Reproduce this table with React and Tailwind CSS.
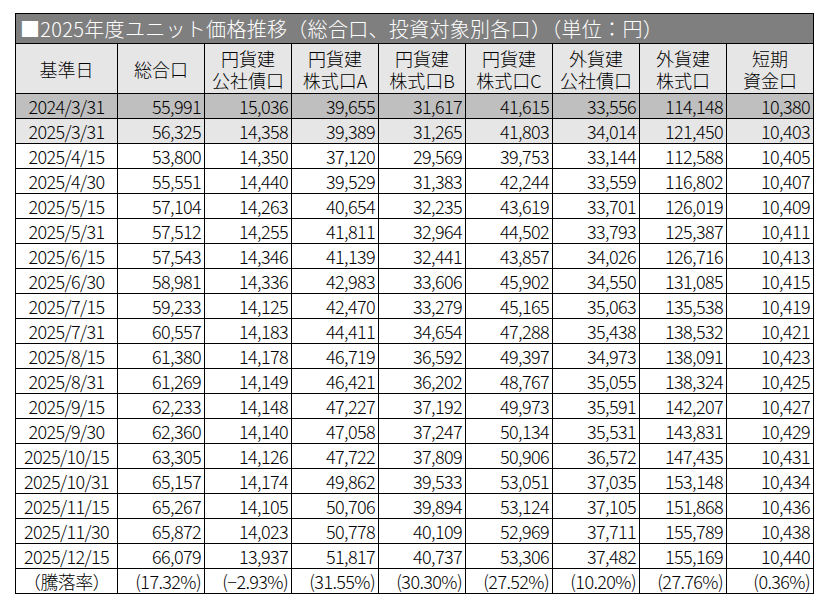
import React from "react";

const cols = [
  ["基準日"],
  ["総合口"],
  ["円貨建", "公社債口"],
  ["円貨建", "株式口A"],
  ["円貨建", "株式口B"],
  ["円貨建", "株式口C"],
  ["外貨建", "公社債口"],
  ["外貨建", "株式口"],
  ["短期", "資金口"],
];

const rows = [
  ["2024/3/31", "55,991", "15,036", "39,655", "31,617", "41,615", "33,556", "114,148", "10,380"],
  ["2025/3/31", "56,325", "14,358", "39,389", "31,265", "41,803", "34,014", "121,450", "10,403"],
  ["2025/4/15", "53,800", "14,350", "37,120", "29,569", "39,753", "33,144", "112,588", "10,405"],
  ["2025/4/30", "55,551", "14,440", "39,529", "31,383", "42,244", "33,559", "116,802", "10,407"],
  ["2025/5/15", "57,104", "14,263", "40,654", "32,235", "43,619", "33,701", "126,019", "10,409"],
  ["2025/5/31", "57,512", "14,255", "41,811", "32,964", "44,502", "33,793", "125,387", "10,411"],
  ["2025/6/15", "57,543", "14,346", "41,139", "32,441", "43,857", "34,026", "126,716", "10,413"],
  ["2025/6/30", "58,981", "14,336", "42,983", "33,606", "45,902", "34,550", "131,085", "10,415"],
  ["2025/7/15", "59,233", "14,125", "42,470", "33,279", "45,165", "35,063", "135,538", "10,419"],
  ["2025/7/31", "60,557", "14,183", "44,411", "34,654", "47,288", "35,438", "138,532", "10,421"],
  ["2025/8/15", "61,380", "14,178", "46,719", "36,592", "49,397", "34,973", "138,091", "10,423"],
  ["2025/8/31", "61,269", "14,149", "46,421", "36,202", "48,767", "35,055", "138,324", "10,425"],
  ["2025/9/15", "62,233", "14,148", "47,227", "37,192", "49,973", "35,591", "142,207", "10,427"],
  ["2025/9/30", "62,360", "14,140", "47,058", "37,247", "50,134", "35,531", "143,831", "10,429"],
  ["2025/10/15", "63,305", "14,126", "47,722", "37,809", "50,906", "36,572", "147,435", "10,431"],
  ["2025/10/31", "65,157", "14,174", "49,862", "39,533", "53,051", "37,035", "153,148", "10,434"],
  ["2025/11/15", "65,267", "14,105", "50,706", "39,894", "53,124", "37,105", "151,868", "10,436"],
  ["2025/11/30", "65,872", "14,023", "50,778", "40,109", "52,969", "37,711", "155,789", "10,438"],
  ["2025/12/15", "66,079", "13,937", "51,817", "40,737", "53,306", "37,482", "155,169", "10,440"],
  ["（騰落率）", "(17.32%)", "(−2.93%)", "(31.55%)", "(30.30%)", "(27.52%)", "(10.20%)", "(27.76%)", "(0.36%)"],
];

const rowBg = (i) => (i === 0 ? "bg-[#bfbfbf]" : i === 1 ? "bg-[#e6e6e6]" : "bg-white");

export default function App() {
  return (
    <div className="w-[829px] h-[607px] bg-white pl-[15px] pt-[13px]" style={{ fontFamily: '"Noto Sans CJK JP", "Noto Sans", sans-serif' }}>
      <table className="border-collapse table-fixed w-[798px] text-black">
        <colgroup>
          <col className="w-[102px]" />
          {cols.slice(1).map((_, i) => (
            <col key={i} className="w-[87px]" />
          ))}
        </colgroup>
        <thead>
          <tr className="h-[30px]">
            <th colSpan={9} className="border border-black bg-[#7f7f7f] text-white text-left font-light text-[20px] leading-none pl-[4px] tracking-[0.3px]">
              ■2025年度ユニット価格推移（総合口、投資対象別各口）（単位：円）
            </th>
          </tr>
          <tr className="h-[50px]">
            {cols.map((c, i) => (
              <th key={i} className="border border-black bg-[#e6e6e6] font-light text-[18px] leading-[22px] text-center p-0">
                {c.map((l, j) => (
                  <div key={j}>{l}</div>
                ))}
              </th>
            ))}
          </tr>
        </thead>
        <tbody>
          {rows.map((r, i) => (
            <tr key={i} className={"h-[25px] " + rowBg(i)}>
              {r.map((v, j) => (
                <td
                  key={j}
                  className={
                    "border border-black font-light text-[18px] leading-none p-0 tracking-[-0.6px] whitespace-nowrap " +
                    (j === 0 ? "text-center" : "text-right pr-[3px]")
                  }
                >
                  {v}
                </td>
              ))}
            </tr>
          ))}
        </tbody>
      </table>
    </div>
  );
}
